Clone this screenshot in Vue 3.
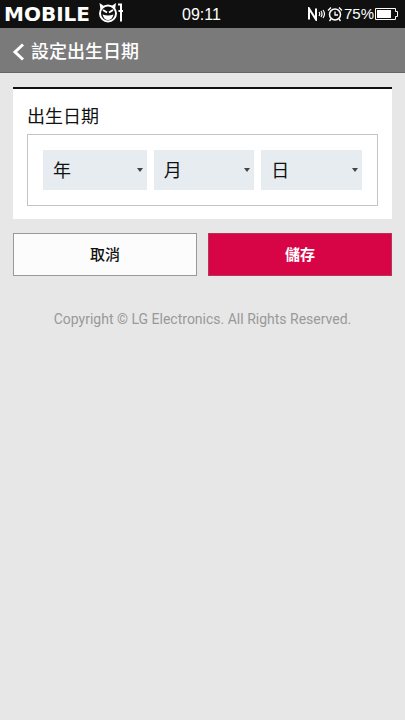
<script setup>
import { ref } from 'vue'

const year = ref('')
const month = ref('')
const day = ref('')

const fields = [
  { id: 'birth-year', label: '年', model: year, options: Array.from({ length: 100 }, (_, i) => 2014 - i) },
  { id: 'birth-month', label: '月', model: month, options: Array.from({ length: 12 }, (_, i) => i + 1) },
  { id: 'birth-day', label: '日', model: day, options: Array.from({ length: 31 }, (_, i) => i + 1) }
]
</script>

<template>
  <div class="screen">
    <div class="status">
      <div class="brand">
        <span class="wordmark">MOBILE</span>
        <svg class="mascot" width="26" height="24" viewBox="0 0 26 24" aria-hidden="true">
          <path d="M1.500 1 6 4 2.500 8ZM18 1 13.500 4 17 8Z" fill="#fff" />
          <circle cx="10" cy="11.500" r="8" fill="none" stroke="#fff" stroke-width="2" />
          <path d="M5 8 9 10.500M15 8 11 10.500" stroke="#fff" stroke-width="2" />
          <path d="M4.500 12.500Q10 14.500 15.500 12.500 14 18 10 18 6 18 4.500 12.500Z" fill="#fff" />
          <path d="M20 2.500H23V19.500M20.500 9H25" fill="none" stroke="#fff" stroke-width="2" />
        </svg>
      </div>
      <time class="clock">09:11</time>
      <div class="indicators">
        <svg width="19" height="14" viewBox="0 0 19 14" aria-hidden="true">
          <path d="M2 12.500V1.500L9 12.500V1.500" fill="none" stroke="#fff" stroke-width="2" />
          <path d="M12 5Q13.500 7 12 9M14 4Q16 7 14 10M16 3Q19 7 16 11" fill="none" stroke="#fff" stroke-width="1.200" />
        </svg>
        <svg width="16" height="16" viewBox="0 0 16 16" aria-hidden="true">
          <circle cx="8" cy="8.500" r="5.500" fill="none" stroke="#fff" stroke-width="1.500" />
          <path d="M8 5.500V9H11M1 4.500 4 1.500M12 1.500 15 4.500M4 13 2.500 15M12 13 13.500 15" fill="none" stroke="#fff" stroke-width="1.300" />
        </svg>
        <span>75%</span>
        <svg width="24" height="14" viewBox="0 0 24 14" aria-hidden="true">
          <path d="M.5 1.500H20.500V4.500H22.500V9.500H20.500V12.500H.5Z" fill="none" stroke="#fff" />
          <path d="M2 3H16V11H2Z" fill="#fff" />
        </svg>
      </div>
    </div>

    <header class="bar">
      <a class="back" href="#" aria-label="返回">
        <svg width="14" height="18" viewBox="0 0 14 18" aria-hidden="true">
          <path d="M11 1.500 3 9 11 16.500" fill="none" stroke="#fff" stroke-width="3" />
        </svg>
      </a>
      <h1>設定出生日期</h1>
    </header>

    <form class="content" @submit.prevent>
      <section class="card">
        <h2 id="birth-title">出生日期</h2>
        <div class="group" role="group" aria-labelledby="birth-title">
          <label v-for="f in fields" :key="f.id" class="field" :for="f.id">
            <select :id="f.id" v-model="f.model.value" :aria-label="f.label">
              <option value="">{{ f.label }}</option>
              <option v-for="o in f.options" :key="o" :value="o">{{ o }}</option>
            </select>
            <svg class="arrow" width="6" height="4" viewBox="0 0 6 4" aria-hidden="true">
              <path d="M0 0H6L3 4Z" fill="#444" />
            </svg>
          </label>
        </div>
      </section>
      <div class="actions">
        <button type="button" class="btn cancel">取消</button>
        <button type="submit" class="btn save">儲存</button>
      </div>
    </form>
    <footer>Copyright © LG Electronics. All Rights Reserved.</footer>
  </div>
</template>

<style>
body {
  background: #e7e7e7;
}
</style>

<style scoped>
.screen {
  min-height: 100vh;
  background: #e7e7e7;
  font-family: Roboto, "Noto Sans CJK TC", sans-serif;
  color: #111;
}
.status {
  display: grid;
  grid-template-columns: 1fr auto 1fr;
  align-items: center;
  height: 28px;
  padding: 0 6px 0 4px;
  background: #101010;
  color: #fff;
}
.status svg {
  flex: none;
}
.brand {
  display: flex;
  align-items: center;
  justify-content: space-between;
  width: 120px;
}
.wordmark {
  font: bold 20px/24px "DejaVu Sans", sans-serif;
}
.clock {
  padding-top: 2px;
  font: 16px/26px "Liberation Sans", sans-serif;
}
.indicators {
  display: flex;
  align-items: center;
  justify-content: flex-end;
  gap: 1px;
  font: 15px/28px "Liberation Sans", sans-serif;
}
.bar {
  display: flex;
  align-items: center;
  gap: 5px;
  height: 45px;
  box-sizing: border-box;
  padding: 3px 12px 0;
  background: #7a7a7b;
  border-bottom: 1px solid #6a6465;
  color: #fff;
}
.back {
  display: flex;
}
h1 {
  margin: 0;
  font-size: 18px;
  line-height: 24px;
  font-weight: 500;
}
.content {
  padding: 14px 13px 0;
}
.card {
  padding: 16px 14px 13px;
  background: #fff;
  border-top: 2px solid #111;
}
h2 {
  margin: 0 0 5px;
  font-size: 18px;
  line-height: 24px;
  font-weight: 400;
}
.group {
  display: grid;
  grid-template-columns: 104fr 101fr 101fr;
  gap: 7px;
  padding: 15px;
  border: 1px solid #c4c4c4;
}
.field {
  position: relative;
  display: flex;
}
select {
  appearance: none;
  width: 100%;
  height: 40px;
  margin: 0;
  padding: 0 10px;
  border: 0;
  border-radius: 0;
  background: #e6ecef;
  color: #111;
  font: inherit;
  font-size: 18px;
}
.arrow {
  position: absolute;
  right: 4px;
  top: 18px;
  pointer-events: none;
}
.actions {
  display: grid;
  grid-template-columns: 1fr 1fr;
  gap: 11px;
  margin-top: 14px;
}
.btn {
  height: 43px;
  margin: 0;
  padding: 0 0 2px;
  border: 1px solid #999;
  border-radius: 0;
  font: inherit;
  font-size: 15px;
  font-weight: 500;
}
.cancel {
  background: #fcfcfd;
  color: #111;
}
.save {
  background: #d80546;
  border-color: #b4345a;
  color: #fff;
  font-weight: 700;
}
footer {
  margin-top: 33px;
  text-align: center;
  font-size: 14px;
  line-height: 20px;
  color: #999;
}
</style>
